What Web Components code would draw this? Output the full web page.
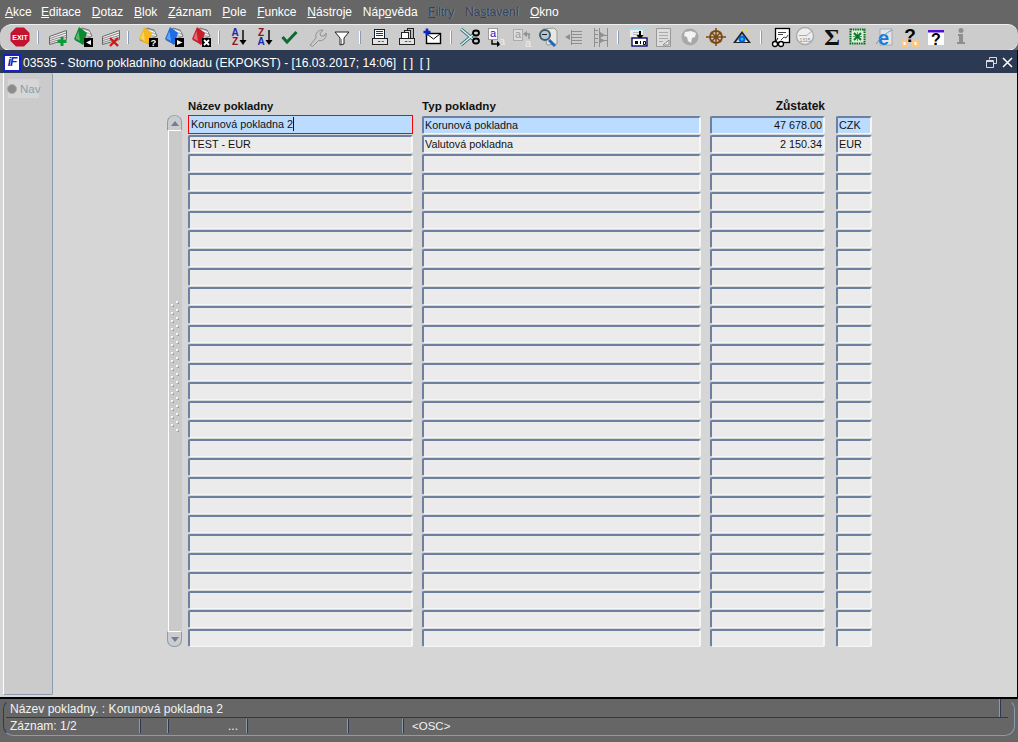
<!DOCTYPE html>
<html lang="cs">
<head>
<meta charset="utf-8">
<title>Storno pokladního dokladu</title>
<style>
  html, body { margin: 0; padding: 0; background: #666; }
  body { width: 1018px; height: 742px; overflow: hidden; font: 12px "Liberation Sans", Arial, sans-serif; }
  app-shell { display: flex; flex-direction: column; width: 1018px; height: 742px; }
</style>
</head>
<body>
<app-shell>
  <app-menu></app-menu>
  <app-toolbar></app-toolbar>
  <form-window heading="03535 - Storno pokladního dokladu (EKPOKST) - [16.03.2017; 14:06]  [ ]  [ ]">
    <nav-panel slot="nav"></nav-panel>
    <record-table></record-table>
  </form-window>
  <status-bar message="Název pokladny. : Korunová pokladna 2" record="Záznam: 1/2" mode="&lt;OSC&gt;"></status-bar>
</app-shell>

<script>
// menu ---------------------------------------------------------------
class AppMenu extends HTMLElement {
  connectedCallback() {
    const items = [
      ['', 'A', 'kce'], ['', 'E', 'ditace'], ['', 'D', 'otaz'], ['', 'B', 'lok'], ['', 'Z', 'áznam'],
      ['', 'P', 'ole'], ['', 'F', 'unkce'], ['', 'N', 'ástroje'], ['Náp', 'o', 'věda'],
      ['', 'F', 'iltry', 1], ['Na', 's', 'tavení', 1], ['', 'O', 'kno']
    ];
    const root = this.attachShadow({ mode: 'open' });
    root.innerHTML = `
      <style>
        :host { display: flex; gap: 10.8px; height: 24px; padding: 5px 0 0 5px; box-sizing: border-box;
                background: #666; color: #fff; font: 12px/15px "Liberation Sans", Arial, sans-serif; }
        span:first-of-type { margin-right: -1.500px; }
        u { text-underline-offset: 1px; }
        .off { color: #33445c; text-shadow: 1px 0 0 #7f8a99; }
      </style>
      ${items.map(i => `<span class="${i[3] ? 'off' : ''}">${i[0]}<u>${i[1]}</u>${i[2]}</span>`).join('')}`;
  }
}
customElements.define('app-menu', AppMenu);

// toolbar icons, all 24x24 -------------------------------------------
const wedge = (color, inner) => `
  <polygon points="10,3 17,5 20,11 12,15 12,19 3,15" fill="#bbb" stroke="#555" stroke-width=".7"/>
  <path d="M12 5.500l6 2M13 8.500l6 2" stroke="#fff"/>
  <polygon points="7,2 2,14 11,20 15,8" fill="${color}"/>
  <polygon points="6.500,6 3.500,13.500 8,16" fill="#fff" opacity=".35"/>
  <rect x="12" y="13" width="9" height="9" fill="#000"/>${inner}`;
const stripes = `
  <polygon points="4.500,11.500 21.500,5.500 21.500,14.500 4.500,19.500" fill="#eee" stroke="#666"/>
  <path d="M5 13.500 21 8M5 15.500 21 10.500M5 17.500 21 12.500" stroke="#8a8a8a"/>`;
const fnt = 'font-family="Liberation Sans, Arial, sans-serif"';
const gray = '#8f8f8f';
const ICONS = {
  sep: `<rect x="12" y="6" width="1" height="13" fill="#8a9bb5"/><rect x="11" y="6" width="1" height="13" fill="#fff"/>`,
  exit: `<polygon points="8,2.500 16,2.500 21.500,8 21.500,16 16,21.500 8,21.500 2.500,16 2.500,8" fill="#c4122f"/>
         <text x="12" y="14.500" text-anchor="middle" font-size="7" font-weight="700" fill="#fff" ${fnt}>EXIT</text>`,
  ins: `${stripes}<path d="M17 12v9M12.500 16.500h9" stroke="#0a9a3a" stroke-width="3"/>`,
  dup: wedge('#0a8a2e', `<polygon points="14,17.500 19,15 19,20" fill="#fff"/>`),
  del: `${stripes}<path d="M12 13 20 21M20 13 12 21" stroke="#d01818" stroke-width="2.400"/>`,
  query: wedge('#f3b81c', `<text x="16.500" y="21" text-anchor="middle" font-size="9.500" font-weight="700" fill="#fff" ${fnt}>?</text>`),
  exec: wedge('#1c6ee8', `<polygon points="14,15 19.500,17.500 14,20" fill="#fff"/>`),
  cancel: wedge('#cc1c2c', `<path d="M14 15 19 20M19 15 14 20" stroke="#fff" stroke-width="1.800"/>`),
  az: `<text x="9" y="11" text-anchor="middle" font-size="10" font-weight="700" fill="#1a2aa8" ${fnt}>A</text>
       <text x="9" y="20" text-anchor="middle" font-size="10" font-weight="700" fill="#8c1420" ${fnt}>Z</text>
       <path d="M17 5v11" stroke="#000" stroke-width="1.400"/><polygon points="13.500,15 20.500,15 17,20" fill="#000"/>`,
  za: `<text x="9" y="11" text-anchor="middle" font-size="10" font-weight="700" fill="#8c1420" ${fnt}>Z</text>
       <text x="9" y="20" text-anchor="middle" font-size="10" font-weight="700" fill="#1a2aa8" ${fnt}>A</text>
       <path d="M17 5v11" stroke="#000" stroke-width="1.400"/><polygon points="13.500,15 20.500,15 17,20" fill="#000"/>`,
  check: `<path d="M5.500 12 10 17 19.500 7" fill="none" stroke="#0b6b30" stroke-width="3"/>`,
  wrench: `<path d="M6 20 12 13C11 8 14 5 19 5L16 8.500 17 11 20 11 22 8C23 13 19 16.500 14.500 15.500L8.500 21.500Z" fill="none" stroke="${gray}"/>`,
  filter: `<polygon points="5,7 19,7 14,13 14,19 10,20 10,13" fill="#fff" stroke="#222"/><path d="M11.500 14v5" stroke="#999"/>`,
  print: `<rect x="8.500" y="4.500" width="10" height="9" fill="#fff" stroke="#123"/><path d="M10 6.500h7M10 8.500h7M10 10.500h7" stroke="#1a2ac0"/>
          <rect x="6.500" y="13.500" width="15" height="6" fill="#e4e4e4" stroke="#222"/><path d="M12 16.500h2" stroke="#d02020"/><path d="M14 16.500h2" stroke="#e0c020"/><path d="M16 16.500h2" stroke="#10a030"/>`,
  prints: `<rect x="13.500" y="3.500" width="6" height="10" fill="#bbb" stroke="#222"/><rect x="10.500" y="5.500" width="6" height="8" fill="#ddd" stroke="#222"/><rect x="7.500" y="7.500" width="7" height="6" fill="#fff" stroke="#222"/>
           <rect x="5.500" y="13.500" width="15" height="6" fill="#e4e4e4" stroke="#222"/><path d="M11 16.500h2" stroke="#d02020"/><path d="M13 16.500h2" stroke="#e0c020"/><path d="M15 16.500h2" stroke="#10a030"/>`,
  mail: `<rect x="5.500" y="8.500" width="14" height="10" fill="#fff" stroke="#000" stroke-width="1.400"/><path d="M6 9l6.500 5L19 9" fill="none" stroke="#000"/>
         <path d="M6 3.500v7M2.500 7h7" stroke="#0a28c8" stroke-width="2.600"/>`,
  cut: `<path d="M3 4 16 15M3 20 16 9" stroke="#2f6f78" stroke-width="3"/><path d="M3 4 16 15M3 20 16 9" stroke="#e0f4f4" stroke-width="1.400"/>
        <ellipse cx="18" cy="8" rx="3" ry="2.500" fill="none" stroke="#000" stroke-width="1.800"/><ellipse cx="18" cy="16" rx="3" ry="2.500" fill="none" stroke="#000" stroke-width="1.800"/>`,
  copy: `<rect x="6.500" y="3.500" width="9" height="11" fill="#fff" stroke="#555" stroke-dasharray="1 1"/>
         <text x="11" y="12" text-anchor="middle" font-size="11" fill="#1414d0" ${fnt}>a</text>
         <path d="M10 15v4h6" fill="none" stroke="#000" stroke-width="1.400"/><polygon points="15,16 19,19 15,22" fill="#000"/>
         <text x="20" y="20" text-anchor="middle" font-size="11" fill="#eee" ${fnt}>a</text>`,
  paste: `<rect x="3.500" y="4.500" width="9" height="11" fill="#ddd" stroke="#aaa"/>
          <text x="8" y="13" text-anchor="middle" font-size="11" fill="#999" ${fnt}>a</text>
          <path d="M20 9h-4M19 9v5" fill="none" stroke="${gray}" stroke-width="1.400"/><polygon points="17,6 13,9 17,12" fill="${gray}"/>
          <text x="18" y="22" text-anchor="middle" font-size="11" fill="#eee" ${fnt}>a</text>`,
  find: `<polygon points="8,4 19,3 22,6 22,19 12,20" fill="#e8e8e0" stroke="#999"/>
         <path d="M14 15 20 21" stroke="#1a68c8" stroke-width="3"/>
         <circle cx="10" cy="10" r="5" fill="#b6c8d4" stroke="#3f5f70" stroke-width="2"/><path d="M7 9.500h5" stroke="#222"/>`,
  ind: `<path d="M9.500 5v15" stroke="${gray}"/><path d="M10 6.500h10M10 9.500h10M10 12.500h10M10 15.500h10M10 18.500h10" stroke="${gray}"/><polygon points="3,12 8,9 8,15" fill="${gray}"/>`,
  cols: `<path d="M6.500 3v19M11.500 3v19M19.500 3v19" stroke="${gray}"/><path d="M6 5.500h4M6 9.500h4M6 13.500h4M6 17.500h4" stroke="${gray}"/><path d="M12 10.500h8M12 15.500h8" stroke="${gray}"/><polygon points="12,7 17,10 12,13" fill="${gray}"/><polygon points="12,13 17,15.500 12,18" fill="${gray}"/>`,
  imp: `<rect x="3" y="3" width="15" height="2" fill="#a8dcf8"/><rect x="3" y="5" width="13" height="7" fill="#eee"/>
        <path d="M6 7.500h6M6 9.500h6" stroke="#bbb"/><path d="M13 6v6" stroke="#000" stroke-width="2"/><polygon points="9.500,10 16.500,10 13,15" fill="#000"/>
        <rect x="5" y="13" width="15" height="8" fill="#fff" stroke="#0a0a60" stroke-width="1.400"/><rect x="8" y="16" width="3" height="3" fill="#000"/><path d="M13.500 16v3M16.500 16.500h2v3h-2z" stroke="#000" fill="none"/>`,
  page: `<polygon points="5.500,3.500 19.500,3.500 19.500,21.500 5.500,21.500" fill="#ddd" stroke="#999"/><path d="M8 7.500h9M8 10.500h9M8 13.500h9M8 16.500h4" stroke="#aaa"/><polygon points="12,20 18,20 18,15" fill="#eee" stroke="#888"/>`,
  globe: `<circle cx="12" cy="12" r="8.500" fill="#a8a8a8"/><path d="M7 7 13 6 18 8 17 12 14 13 13 18 10 16 9 12 6 11Z" fill="#f4f4f4"/>`,
  wheel: `<circle cx="12" cy="12" r="6" fill="none" stroke="#7b4a12" stroke-width="1.800"/><path d="M12 3v18M2 12h20M7 7l10 10M17 7 7 17" stroke="#7b4a12" stroke-width="1.500"/>`,
  eye: `<polygon points="3,18 12,6 21,18" fill="#222"/><polygon points="6,17 12,9 18,17" fill="#d8e8e8"/><circle cx="12" cy="14" r="3.500" fill="#0c5ce0"/><circle cx="12" cy="14" r="1.500" fill="#00d0f0"/>
        <path d="M7 5l2 2M12 4v2M17 5l-2 2M4 8l2 1M20 8l-2 1" stroke="#f4e800"/>`,
  chart: `<rect x="6.500" y="3.500" width="14" height="14" fill="#fff" stroke="#000" stroke-width="1.300"/><path d="M9 7.500h8M9 9.500h5M12 15l3-3 2 1 2-3" stroke="#444" fill="none"/>
          <circle cx="6" cy="19" r="2.500" fill="#fff" stroke="#000" stroke-width="1.300"/><circle cx="12" cy="19" r="2.500" fill="#fff" stroke="#000" stroke-width="1.300"/><path d="M8 18.500h2M7 16 9 13" stroke="#000"/>`,
  gauge: `<circle cx="12" cy="11" r="8.500" fill="#eee" stroke="#aaa" stroke-width="1.400"/><path d="M6 10.500h8M13 11l6-5" stroke="#aaa"/><text x="12" y="17" text-anchor="middle" font-size="5" fill="#888" ${fnt}>1315</text>`,
  sigma: `<text x="12" y="20" text-anchor="middle" font-size="24" font-weight="700" fill="#111" font-family="Liberation Serif, serif">Σ</text>`,
  excel: `<rect x="4.500" y="4.500" width="14" height="14" fill="#d8eed8" stroke="#0a6a20" stroke-width="2" stroke-dasharray="1.500 .8"/><path d="M8 8l7 7M15 8l-7 7" stroke="#0a7a28" stroke-width="2"/><path d="M7 11.500h9M11.500 7v9" stroke="#0a6a20" opacity=".6"/>`,
  ie: `<polygon points="8,4 20,4 20,20 8,20" fill="#e4e4e4" stroke="#aaa"/><text x="11.500" y="20" text-anchor="middle" font-size="20" font-weight="700" fill="#1c78d8" ${fnt}>e</text><path d="M4 19C8 13 14 8 20 5" fill="none" stroke="#4aa0e8"/>`,
  help: `<rect x="3" y="15" width="7" height="7" fill="#f8c888"/><rect x="14" y="15" width="7" height="7" fill="#f8c888"/><rect x="5.500" y="17" width="2" height="3" fill="#fff"/><rect x="16.500" y="17" width="2" height="3" fill="#fff"/>
         <text x="12" y="17" text-anchor="middle" font-size="19" font-weight="700" fill="#000" ${fnt}>?</text>`,
  helpw: `<rect x="4" y="5" width="16" height="15" fill="#fff"/><rect x="4" y="5" width="16" height="2.500" fill="#5010d0"/>
          <text x="12" y="20" text-anchor="middle" font-size="16" font-weight="700" fill="#000" ${fnt}>?</text>`,
  info: `<circle cx="12" cy="5.500" r="2.500" fill="${gray}"/><path d="M9 9h5v8h2v2H8v-2h2v-6H9z" fill="${gray}"/>`
};

class AppToolbar extends HTMLElement {
  connectedCallback() {
    // name + centre of the icon on the bar
    const tools = [['exit',20],['sep',38],['ins',57],['dup',84],['del',110],['sep',128],['query',149],['exec',175],['cancel',202],['sep',219],
      ['az',238],['za',264],['check',289],['wrench',316],['filter',342],['sep',360],['print',378],['prints',406],['mail',433],['sep',451],
      ['cut',470],['copy',494],['paste',522],['find',547],['ind',574],['cols',600],['sep',618],['imp',639],['page',663],['globe',690],
      ['wheel',716],['eye',742],['sep',761],['chart',781],['gauge',805],['sigma',832],['excel',858],['ie',884],['help',910],['helpw',936],['info',961]];
    const cells = tools.map((t, i) => {
      const w = tools[i + 1] ? tools[i + 1][1] - t[1] : 24;
      return `<span style="width:${w}px"><svg width="24" height="24" viewBox="0 0 24 24">${ICONS[t[0]]}</svg></span>`;
    }).join('');
    const root = this.attachShadow({ mode: 'open' });
    root.innerHTML = `
      <style>
        :host { display: flex; flex: none; box-sizing: border-box; height: 27px; padding: 0 0 1px 8px; background: #ccc;
                border-top: 1px solid #eee; border-bottom: 1px solid #fff; border-radius: 12px 10px 10px 10px; align-items: flex-start; }
        span { display: block; flex: none; height: 24px; }
        svg { display: block; }
      </style>${cells}`;
  }
}
customElements.define('app-toolbar', AppToolbar);

// window with title bar ----------------------------------------------
class FormWindow extends HTMLElement {
  connectedCallback() {
    const root = this.attachShadow({ mode: 'open' });
    root.innerHTML = `
      <style>
        :host { display: flex; flex-direction: column; height: 649px; box-sizing: border-box; flex: none;
                border-right: 1px solid #000; border-bottom: 2px solid #000; margin-top: -1px; background: #d6d6d6; }
        header { display: flex; align-items: center; flex: none; height: 23px; background: #2b3a52; color: #fff;
                 border-top: 2px solid #2b3a52; box-sizing: border-box; padding-left: 3px; white-space: pre; font-size: 12.150px; }
        .logo { flex: none; box-sizing: border-box; width: 18px; height: 18px; margin-right: 2px; background: #fff; border: 1px solid #1820c8; outline: 1px solid #1820c8; outline-offset: -2px;
                color: #1820c8; font: italic 700 12px/15px "Liberation Sans", sans-serif; letter-spacing: -1px; text-align: center; }
        .title { flex: 1; }
        .btns { display: flex; gap: 5px; padding-right: 4px; }
        .body { flex: 1; display: flex; min-height: 0; padding: 0 0 2px 3px; }
      </style>
      <header>
        <span class="logo">iF</span><span class="title">${this.getAttribute('heading')}</span>
        <span class="btns">
          <svg width="11" height="11" viewBox="0 0 11 11"><path d="M3.500 2.500V.5h7v6H8M.5 3.500h7v7h-7zM.5 4.500h7" fill="none" stroke="#ddd"/></svg>
          <svg width="11" height="11" viewBox="0 0 11 11"><path d="M1 1 10 10M10 1 1 10" stroke="#fff" stroke-width="1.500"/></svg>
        </span>
      </header>
      <div class="body"><slot name="nav"></slot><slot></slot></div>`;
  }
}
customElements.define('form-window', FormWindow);

class NavPanel extends HTMLElement {
  connectedCallback() {
    const root = this.attachShadow({ mode: 'open' });
    root.innerHTML = `
      <style>
        :host { display: block; box-sizing: border-box; flex: none; width: 50px; background: #cbcbcb; padding: 6px 0 0 4px;
                border-left: 1px solid #fff; border-right: 1px solid #8a9bb0; border-bottom: 1px solid #8a9bb0; border-radius: 0 2px 2px 0; }
        div { display: flex; align-items: center; gap: 3px; width: 31px; height: 19px; background: #d6d6d6; color: #8a9fb0; font-size: 11.500px; }
        i { flex: none; width: 8px; height: 8px; border-radius: 50%; background: #8c8c8c; border: 1px solid #aaa; margin-left: -1px; box-sizing: content-box; }
      </style>
      <div><i></i>Nav</div>`;
  }
}
customElements.define('nav-panel', NavPanel);

// one field of a record ----------------------------------------------
class TextField extends HTMLElement {
  connectedCallback() {
    const root = this.attachShadow({ mode: 'open' });
    root.innerHTML = `<style>
        :host { display: block; position: relative; box-sizing: border-box; height: 18px; margin-top: 1px; padding: 0 1px;
                background: #ebebeb; border: 2px solid; border-color: #6d80a0 #f6f6f6 #f6f6f6 #6d80a0; border-bottom-width: 1px; border-radius: 2px;
                font: 10.800px/15px "Liberation Sans", Arial, sans-serif; color: #111; white-space: pre; overflow: hidden; }
        :host([current]) { background: #bcdcff; }
        :host([right]) { text-align: right; }
        :host([focused]) { border: 1px solid #f00; margin-top: 0; height: 19px; padding: 1px 2px; border-radius: 0; overflow: visible; }
        b { display: inline-block; width: 1px; height: 14px; background: #111; vertical-align: -3px; }
      </style>${this.textContent}${this.hasAttribute('focused') ? '<b></b>' : ''}`;
  }
}
customElements.define('text-field', TextField);

class ScrollStrip extends HTMLElement {
  connectedCallback() {
    const root = this.attachShadow({ mode: 'open' });
    // grip dots of the thumb, two staggered columns
    let dots = '';
    for (let i = 0; i < 17; i++) {
      dots += `<i style="top:${186 + i * 8}px;left:9px"></i>`;
      if (i < 16) dots += `<i style="top:${189 + i * 8}px;left:4px"></i>`;
    }
    root.innerHTML = `
      <style>
        :host { display: flex; flex-direction: column; position: relative; box-sizing: border-box; width: 16px; height: 532px; }
        button { flex: none; display: flex; align-items: center; justify-content: center; width: 15px; height: 16px; padding: 0; background: #ccc;
                 border: 1px solid #8a9bb0; box-sizing: border-box; }
        .up { border-radius: 7px 7px 0 0; border-bottom-color: #fff; border-top-color: #9aaabc; }
        .down { border-radius: 0 0 7px 7px; border-top-color: #fff; }
        .track { flex: 1; box-sizing: border-box; width: 14px; margin-left: 1px; background: #cacaca; border-left: 1px solid #fff; }
        i { position: absolute; width: 2px; height: 2px; background: #f6f6f6; box-shadow: 1px 1px 0 #a4a4a4; }
        em { width: 0; height: 0; border: 4px solid transparent; border-top: 0; border-bottom: 5px solid #6d7f99; }
        .down em { border-top: 5px solid #6d7f99; border-bottom: 0; }
      </style>
      <button class="up" tabindex="-1"><em></em></button>
      <div class="track"></div>
      <button class="down" tabindex="-1"><em></em></button>${dots}`;
  }
}
customElements.define('scroll-strip', ScrollStrip);

class RecordTable extends HTMLElement {
  connectedCallback() {
    const data = [
      ['Korunová pokladna 2', 'Korunová pokladna', '47 678.00', 'CZK'],
      ['TEST - EUR', 'Valutová pokladna', '2 150.34', 'EUR']
    ];
    let rows = '';
    for (let i = 0; i < 28; i++) {
      const d = data[i] || ['', '', '', ''];
      const cur = i === 0 ? ' current' : '';
      rows += `<text-field${i === 0 ? ' focused current' : ''}>${d[0]}</text-field>
        <text-field${cur}>${d[1]}</text-field>
        <text-field right${cur}>${d[2]}</text-field>
        <text-field${cur}>${d[3]}</text-field>`;
    }
    const root = this.attachShadow({ mode: 'open' });
    root.innerHTML = `
      <style>
        :host { display: flex; align-items: flex-start; gap: 5px; flex: 1; padding: 26px 0 0 114px; box-sizing: border-box; }
        .cols, .heads { display: grid; grid-template-columns: 225px 279px 115px 38px; column-gap: 9px; }
        .cols { grid-auto-rows: 19px; }
        .cols > :nth-child(4n), .heads > :nth-child(4n) { margin-left: 2px; }
        h4 { margin: 0; height: 16px; font: 700 11.300px/14px "Liberation Sans", Arial, sans-serif; color: #111; }
        h4:nth-child(2) { font-size: 11.600px; }
        h4:nth-child(3) { font-size: 12px; text-align: right; }
        .wrap { display: flex; flex-direction: column; }
        .scroll { padding-top: 16px; }
      </style>
      <div class="scroll"><scroll-strip></scroll-strip></div>
      <div class="wrap">
        <div class="heads"><h4>Název pokladny</h4><h4>Typ pokladny</h4><h4>Zůstatek</h4><h4></h4></div>
        <div class="cols">${rows}</div>
      </div>`;
  }
}
customElements.define('record-table', RecordTable);

// bottom status ------------------------------------------------------
class StatusBar extends HTMLElement {
  connectedCallback() {
    const root = this.attachShadow({ mode: 'open' });
    root.innerHTML = `
      <style>
        :host { display: block; position: relative; flex: 1; box-sizing: border-box; background: #666; color: #f2f2f2;
                font: 12.100px/15px "Liberation Sans", Arial, sans-serif; }
        .frame { position: absolute; left: 3px; right: 3px; top: 0; height: 37px; box-sizing: border-box; border: 1px solid #8a9bb0;
                 border-left-color: #2b3a52; border-top-color: transparent; border-radius: 10px; pointer-events: none; }
        .msg { display: flex; align-items: center; height: 19px; margin: 0 10px 0 6px; padding: 2px 0 0 4px; box-sizing: border-box; border-bottom: 1px solid #2b3a52; }
        .msg span { flex: 1; }
        .msg i { flex: none; width: 1px; height: 18px; margin: -2px 7px 0 0; background: #2b3a52; border-left: 1px solid #8a9bb0; }
        .line { display: flex; height: 16px; padding-left: 10px; align-items: center; font-size: 12px; }
        .line span { box-sizing: border-box; height: 14px; flex: none; border-right: 1px solid #8a9bb0; box-shadow: 1px 0 0 #2b3a52; white-space: nowrap; }
        .line span:last-child { border: 0; box-shadow: none; padding-left: 9px; font-size: 11.500px; }
        .dots { text-align: right; padding-right: 8px; }
      </style>
      <div class="frame"></div>
      <div class="msg"><span>${this.getAttribute('message')}</span><i></i></div>
      <div class="line">
        <span style="width:130px">${this.getAttribute('record')}</span>
        <span style="width:28px"></span>
        <span style="width:79px" class="dots">...</span>
        <span style="width:101px"></span>
        <span style="width:55px"></span>
        <span>${this.getAttribute('mode').replace('<', '&lt;')}</span>
      </div>`;
  }
}
customElements.define('status-bar', StatusBar);

class AppShell extends HTMLElement {}
customElements.define('app-shell', AppShell);
</script>
</body>
</html>
